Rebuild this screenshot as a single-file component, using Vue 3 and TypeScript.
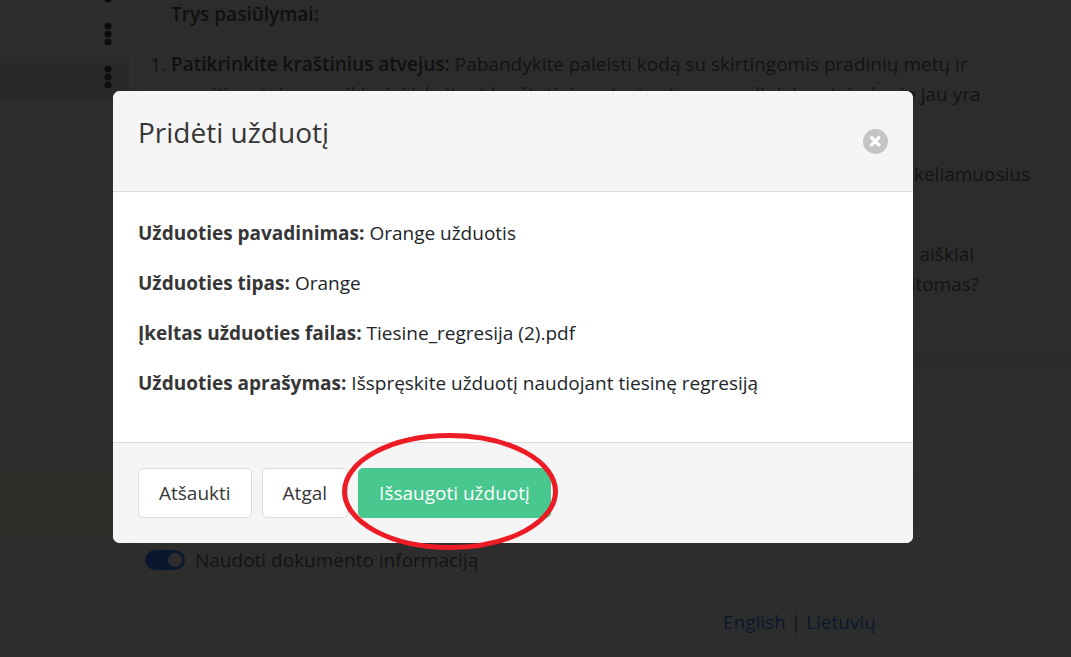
<script setup lang="ts">
import { ref } from 'vue'

interface Detail {
  label: string
  value: string
}

const details: Detail[] = [
  { label: 'Užduoties pavadinimas:', value: 'Orange užduotis' },
  { label: 'Užduoties tipas:', value: 'Orange' },
  { label: 'Įkeltas užduoties failas:', value: 'Tiesine_regresija (2).pdf' },
  { label: 'Užduoties aprašymas:', value: 'Išspręskite užduotį naudojant tiesinę regresiją' },
]

const rows = [
  { id: 1, active: false },
  { id: 2, active: false },
  { id: 3, active: true },
]

const useDocument = ref(true)
</script>

<template>
  <div class="app">
    <div class="page">
      <aside class="sidebar">
        <ul class="rows">
          <li v-for="row in rows" :key="row.id" class="row" :class="{ active: row.active }">
            <button class="dots" type="button" aria-label="Meniu">
              <svg width="8" height="24" viewBox="0 0 8 24">
                <circle cx="4" cy="4" r="3.6" />
                <circle cx="4" cy="12" r="3.6" />
                <circle cx="4" cy="20" r="3.6" />
              </svg>
            </button>
          </li>
        </ul>
        <div class="notice"></div>
      </aside>

      <main class="content">
        <section class="message">
          <p class="lead"><strong>Trys pasiūlymai:</strong></p>
          <ol class="tips">
            <li>
              <strong>Patikrinkite kraštinius atvejus:</strong> Pabandykite paleisti kodą su skirtingomis pradinių metų ir<br />
              pareiti metais, ar veikia, jei įskaitant kraštutinius atvejus (pvz., pradiniai metais, kurie jau yra
            </li>
          </ol>
          <p class="tail wide">keliamuosius</p>
          <p class="tail">aiškiai&nbsp;<br />skaitomas?</p>
        </section>
        <div class="strip"></div>
        <div class="field first"></div>
        <div class="field second"></div>
        <div class="field third"></div>
        <label class="switch">
          <input v-model="useDocument" type="checkbox" role="switch" />
          <span>Naudoti dokumento informaciją</span>
        </label>
        <nav class="languages"><a href="#en">English</a> | <a href="#lt">Lietuvių</a></nav>
      </main>
    </div>

    <div class="overlay">
      <section class="dialog" role="dialog" aria-modal="true" aria-labelledby="dialog-title">
        <header class="head">
          <h1 id="dialog-title">Pridėti užduotį</h1>
          <button class="close" type="button" aria-label="Uždaryti">
            <svg width="25" height="25" viewBox="0 0 25 25">
              <circle cx="12.5" cy="12.5" r="12.5" fill="#c5c5c5" />
              <path d="M7.6 7.6 16.8 16.8M16.8 7.6 7.6 16.8" stroke="#fff" stroke-width="3.2" />
            </svg>
          </button>
        </header>
        <div class="body">
          <p v-for="item in details" :key="item.label"><strong>{{ item.label }}</strong> {{ item.value }}</p>
        </div>
        <footer class="foot">
          <button class="button" type="button">Atšaukti</button>
          <button class="button" type="button">Atgal</button>
          <div class="marked">
            <button class="button save" type="button">Išsaugoti užduotį</button>
            <svg class="ring" width="216" height="117" viewBox="0 0 216 117">
              <ellipse cx="108" cy="58.5" rx="105.5" ry="56" fill="none" stroke="#ed1c24" stroke-width="5" />
            </svg>
          </div>
        </footer>
      </section>
    </div>
  </div>
</template>

<style>
body {
  margin: 0;
  background: #fff;
}
</style>

<style scoped>
* {
  box-sizing: border-box;
}

.app {
  position: relative;
  height: 100vh;
  overflow: hidden;
  font-family: 'Open Sans', 'Noto Sans', sans-serif;
  font-size: 19px;
  line-height: 30px;
  color: #4a4a4a;
}

button {
  font: inherit;
  color: inherit;
}

strong {
  font-weight: 700;
  color: #363636;
}

.page {
  display: flex;
  height: 100%;
  background: #fff;
}

.sidebar {
  display: flex;
  flex-direction: column;
  flex: none;
  width: 133px;
  height: 639px;
  overflow: hidden;
  background: #fdfdfd;
}

.rows {
  margin: -29px 0 0;
  padding: 0;
  list-style: none;
}

.row {
  display: flex;
  align-items: center;
  justify-content: flex-end;
  width: 129px;
  height: 43px;
  padding: 0 17px 3px 0;
}

.row.active {
  height: 42px;
  padding-bottom: 2px;
  background: #e2e2e2;
}

.dots {
  display: flex;
  padding: 0;
  border: 0;
  background: none;
}

.dots svg {
  fill: #1c1c1c;
}

.notice {
  height: 60px;
  margin-top: 375px;
  background: #fdfbdc;
}

.content {
  flex: 1;
  min-width: 0;
  margin-left: 2px;
  border-left: 1px solid #f0f0f0;
}

.message {
  height: 330px;
  margin: 0 27px 0 8px;
  padding-left: 27px;
  border-radius: 0 0 12px 12px;
  background: #f5f5f5;
  white-space: nowrap;
}

.message strong {
  font-weight: 600;
}

.lead {
  margin: 0;
  padding-bottom: 21px;
  line-height: 28px;
}

.tips {
  margin: 0 0 50px;
  padding: 0;
}

.tail {
  margin: 0 0 50px;
  padding-right: 65px;
  text-align: right;
}

.tail.wide {
  padding-right: 14px;
}

.strip {
  height: 32px;
  margin-top: 25px;
  border-top: 1px solid #e2e2e2;
  border-bottom: 1px solid #e2e2e2;
  background: linear-gradient(#f0f0f0, #fafafa);
}

.field {
  border-bottom: 1px solid #e2e2e2;
}

.first {
  height: 49px;
}

.second {
  height: 41px;
}

.third {
  height: 47px;
}

.switch {
  display: flex;
  align-items: center;
  gap: 10px;
  margin: 21px 0 0 9px;
}

.switch input {
  display: flex;
  align-items: center;
  justify-content: flex-end;
  width: 40px;
  height: 20px;
  margin: 0;
  padding: 3px;
  border-radius: 10px;
  appearance: none;
  background: #0d6efd;
}

.switch input::before {
  width: 14px;
  height: 14px;
  border-radius: 7px;
  background: #fff;
  content: '';
}

.languages {
  margin: 32px 0 0 587px;
  white-space: nowrap;
}

.languages a {
  color: #0d6efd;
  text-decoration: none;
}

.overlay {
  position: absolute;
  inset: 0;
  padding: 91px 113px;
  background: rgba(10, 10, 10, 0.86);
}

.dialog {
  max-width: 800px;
  border-radius: 7px;
  background: #fff;
}

.head {
  display: flex;
  align-items: flex-start;
  justify-content: space-between;
  height: 101px;
  padding: 21px 25px;
  border-bottom: 1px solid #dbdbdb;
  border-radius: 7px 7px 0 0;
  background: #f5f5f5;
}

h1 {
  margin: 0;
  font-size: 28px;
  font-weight: 400;
  line-height: 40px;
  color: #363636;
}

.close {
  display: flex;
  margin-top: 17px;
  padding: 0;
  border: 0;
  background: none;
}

.body {
  height: 250px;
  padding: 26px 25px;
  color: #212529;
}

.body p {
  margin: 0 0 20px;
}

.foot {
  display: flex;
  gap: 10px;
  padding: 25px;
  border-top: 1px solid #dbdbdb;
  border-radius: 0 0 7px 7px;
  background: #f5f5f5;
}

.button {
  display: block;
  height: 50px;
  padding: 0 20px;
  border: 1px solid #dbdbdb;
  border-radius: 5px;
  background: #fff;
  color: #363636;
  white-space: nowrap;
}

.save {
  border-color: #48c78e;
  background: #48c78e;
  color: #fff;
}

.marked {
  position: relative;
}

.ring {
  position: absolute;
  top: -35px;
  left: -16px;
  pointer-events: none;
}
</style>
